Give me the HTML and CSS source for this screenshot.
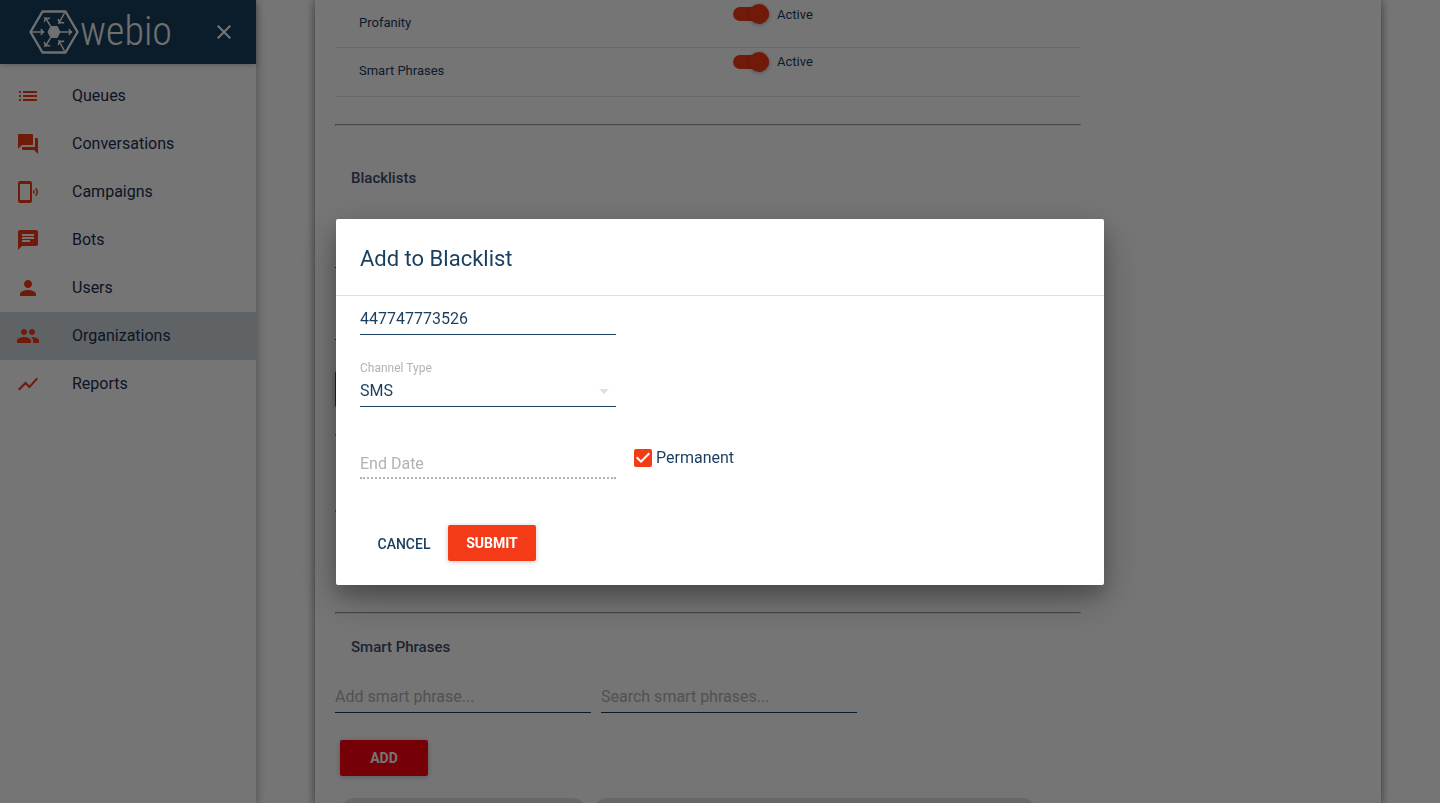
FILE: index.html
```html
<!DOCTYPE html>
<html lang="en">

<head>
    <meta charset="UTF-8">
    <meta name="viewport" content="width=device-width, initial-scale=1.0">
    <title>Webio - Organizations</title>
    <link rel="stylesheet" href="styles.css">
</head>

<body>
    <div class="app">
        <aside class="sidebar">
            <header class="sidebar-header">
                <a class="logo" href="#">
                    <svg width="52" height="46" viewBox="0 0 52 46" fill="none" stroke="currentColor">
                        <path d="M14.5 2.500h23L49.500 23l-12 20.500h-23L2.500 23z" stroke-width="2.400" stroke-linejoin="round" />
                        <path d="M22.500 17h7l3 6-3 6h-7l-3-6z" fill="currentColor" stroke="none" />
                        <path stroke-width="1.500" d="M3 23h13M13 20q.5 2.500 3 3q-2.500.5-3 3M32 23h12M41 20q.5 2.500 3 3q-2.500.5-3 3
                            M22.500 17l-5-8M16 13q1.500-1.500 1-4q2.500 1 5 0M22.500 29l-5 8M16 33q1.500 1.500 1 4q2.500-1 5 0
                            M36.500 4l-5.500 10M30 10q1.500 2 1 4q2.500-1 5 0M36.500 42l-5.500-10M30 36q1.500-2 1-4q2.500 1 5 0" />
                    </svg>
                    <span class="logo-text">webio</span>
                </a>
                <button class="close-button" type="button" aria-label="Close menu">
                    <svg width="24" height="24" viewBox="0 0 24 24" fill="currentColor"><path d="M19 6.410L17.590 5 12 10.590 6.410 5 5 6.410 10.590 12 5 17.590 6.410 19 12 13.410 17.590 19 19 17.590 13.410 12z" /></svg>
                </button>
            </header>
            <nav class="menu">
                <a class="menu-item" href="#">
                    <svg width="24" height="24" viewBox="0 0 24 24"><path d="M3 13h2v-2H3v2zm0 4h2v-2H3v2zm0-8h2V7H3v2zm4 4h14v-2H7v2zm0 4h14v-2H7v2zM7 7v2h14V7H7z" /></svg>
                    <span>Queues</span>
                </a>
                <a class="menu-item" href="#">
                    <svg width="24" height="24" viewBox="0 0 24 24"><path d="M21 6h-2v9H6v2c0 .55.45 1 1 1h11l4 4V7c0-.55-.45-1-1-1zm-4 6V3c0-.55-.45-1-1-1H3c-.55 0-1 .45-1 1v14l4-4h10c.55 0 1-.45 1-1z" /></svg>
                    <span>Conversations</span>
                </a>
                <a class="menu-item" href="#">
                    <svg width="24" height="24" viewBox="0 0 24 24"><path d="M14 1H4C2.900 1 2 1.900 2 3v18c0 1.100.9 2 2 2h10c1.100 0 2-.9 2-2V3c0-1.100-.9-2-2-2zm0 19H4V4h10v16zM20.100 7.700l-1 1c1.800 1.800 1.800 4.600 0 6.500l1 1c2.500-2.300 2.500-6.100 0-8.500zM18 9.800l-1 1c.5.7.5 1.600 0 2.300l1 1c1.200-1.200 1.200-3 0-4.300z" /></svg>
                    <span>Campaigns</span>
                </a>
                <a class="menu-item" href="#">
                    <svg width="24" height="24" viewBox="0 0 24 24"><path d="M20 2H4c-1.100 0-1.990.9-1.990 2L2 22l4-4h14c1.100 0 2-.9 2-2V4c0-1.100-.9-2-2-2zM6 9h12v2H6V9zm8 5H6v-2h8v2zm4-6H6V6h12v2z" /></svg>
                    <span>Bots</span>
                </a>
                <a class="menu-item" href="#">
                    <svg width="24" height="24" viewBox="0 0 24 24"><path d="M12 12c2.210 0 4-1.790 4-4s-1.790-4-4-4-4 1.790-4 4 1.790 4 4 4zm0 2c-2.670 0-8 1.340-8 4v2h16v-2c0-2.660-5.330-4-8-4z" /></svg>
                    <span>Users</span>
                </a>
                <a class="menu-item active" href="#">
                    <svg width="24" height="24" viewBox="0 0 24 24"><path d="M16 11c1.660 0 2.990-1.340 2.990-3S17.660 5 16 5c-1.660 0-3 1.340-3 3s1.340 3 3 3zm-8 0c1.660 0 2.990-1.340 2.990-3S9.660 5 8 5C6.340 5 5 6.340 5 8s1.340 3 3 3zm0 2c-2.330 0-7 1.170-7 3.500V19h14v-2.500c0-2.330-4.670-3.500-7-3.500zm8 0c-.29 0-.62.020-.97.050 1.160.84 1.970 1.970 1.970 3.450V19h6v-2.500c0-2.330-4.670-3.500-7-3.500z" /></svg>
                    <span>Organizations</span>
                </a>
                <a class="menu-item" href="#">
                    <svg width="24" height="24" viewBox="0 0 24 24"><path d="M3.500 18.490l6-6.010 4 4L22 6.920l-1.410-1.410-7.090 7.970-4-4L2 16.990z" /></svg>
                    <span>Reports</span>
                </a>
            </nav>
        </aside>

        <main class="content">
            <div class="panel">
                <table class="settings">
                    <tr>
                        <td>Profanity</td>
                        <td class="toggle-cell"><label class="toggle"><input type="checkbox" checked>Active</label></td>
                    </tr>
                    <tr>
                        <td>Smart Phrases</td>
                        <td class="toggle-cell"><label class="toggle"><input type="checkbox" checked>Active</label></td>
                    </tr>
                </table>

                <hr>

                <section class="blacklists">
                    <h2>Blacklists</h2>
                    <input class="text-field" type="text" aria-label="Add to blacklist">
                    <input class="text-field" type="text" aria-label="Search blacklist">
                    <button class="add-button" type="button" aria-label="Add to blacklist"></button>
                    <div class="list-row"></div>
                    <div class="list-row"></div>
                </section>

                <hr>

                <section class="phrases">
                    <h2>Smart Phrases</h2>
                    <div class="fields">
                        <input class="text-field" type="text" placeholder="Add smart phrase..." aria-label="Add smart phrase">
                        <input class="text-field" type="text" placeholder="Search smart phrases..." aria-label="Search smart phrases">
                    </div>
                    <button class="add-button" type="button">ADD</button>
                    <div class="chips">
                        <span class="chip"></span>
                        <span class="chip chip-wide"></span>
                    </div>
                </section>
            </div>
        </main>
    </div>

    <div class="overlay">
        <form class="dialog" role="dialog" aria-labelledby="dialogTitle">
            <h1 id="dialogTitle">Add to Blacklist</h1>
            <div class="dialog-body">
                <input class="text-field" type="text" value="447747773526" aria-label="Phone number">
                <div class="select-field">
                    <label for="channelType">Channel Type</label>
                    <select id="channelType">
                        <option>SMS</option>
                    </select>
                    <svg class="arrow" width="24" height="24" viewBox="0 0 24 24"><path d="M7 10l5 5 5-5z" /></svg>
                </div>
                <div class="date-row">
                    <input class="date-field" type="text" placeholder="End Date" aria-label="End Date" disabled>
                    <label class="permanent">
                        <span class="checkbox">
                            <input type="checkbox" checked>
                            <svg width="18" height="18" viewBox="0 0 18 18"><path d="M7 14L2 9l1.410-1.410L7 11.170l7.590-7.590L16 5z" /></svg>
                        </span>
                        Permanent
                    </label>
                </div>
                <div class="actions">
                    <button class="cancel-button" type="button">CANCEL</button>
                    <button class="submit-button" type="submit">SUBMIT</button>
                </div>
            </div>
        </form>
    </div>
</body>

</html>
```

FILE: styles.css
```css
* {
    box-sizing: border-box;
}

body {
    margin: 0;
    font-family: Roboto, "Liberation Sans", sans-serif;
    font-size: 16px;
    color: #1a3e5e;
    background-color: #fff;
}

button,
input,
select {
    font-family: inherit;
    color: inherit;
}

.app {
    display: flex;
    height: 100vh;
    overflow: hidden;
}

/* sidebar */
.sidebar {
    flex: none;
    width: 256px;
    box-shadow: 0 3px 10px rgba(0, 0, 0, 0.16), 0 3px 10px rgba(0, 0, 0, 0.23);
}

.sidebar-header {
    display: flex;
    align-items: center;
    justify-content: space-between;
    height: 64px;
    padding: 0 20px 0 28px;
    color: #fff;
    background-color: #1a3e5e;
    box-shadow: 0 1px 6px rgba(0, 0, 0, 0.12), 0 1px 4px rgba(0, 0, 0, 0.12);
}

.logo {
    display: flex;
    align-items: center;
    color: #f4f4f4;
    text-decoration: none;
}

.logo-text {
    font-family: "Roboto Condensed", "Open Sans Condensed", Roboto, sans-serif;
    font-size: 40px;
    font-weight: 300;
    line-height: 56px;
}

.close-button {
    display: flex;
    padding: 0;
    border: none;
    background: none;
}

.menu {
    padding-top: 8px;
}

.menu-item {
    display: flex;
    align-items: center;
    gap: 32px;
    height: 48px;
    padding-left: 16px;
    color: #1a2f54;
    text-decoration: none;
}

.menu-item svg {
    fill: #f43b17;
}

.menu-item span {
    padding-bottom: 2px;
}

.menu-item.active {
    background-color: #cfd8dc;
}

/* organization page */
.content {
    flex: 1;
    padding: 0 59px;
}

.panel {
    height: 100%;
    padding: 0 300px 0 20px;
    overflow: hidden;
    box-shadow: 0 3px 10px rgba(0, 0, 0, 0.3), 0 0 8px rgba(0, 0, 0, 0.3);
}

.panel hr {
    margin: 0;
}

.settings {
    width: 100%;
    margin-bottom: 27px;
    border-collapse: collapse;
    font-size: 13px;
}

.settings tr {
    height: 49px;
    border-bottom: 1px solid #e0e0e0;
}

.settings tr:first-child {
    height: 47px;
}

.settings td {
    width: 50%;
    padding: 0 24px 2px;
}

.settings .toggle-cell {
    padding-top: 4px;
    padding-left: 25px;
    vertical-align: top;
}

.toggle {
    display: flex;
    align-items: center;
    gap: 8px;
}

.toggle input {
    appearance: none;
    display: flex;
    align-items: center;
    justify-content: flex-end;
    width: 36px;
    height: 14px;
    margin: 3px 0;
    border-radius: 7px;
    background-color: #f43b17;
}

.toggle input::before {
    content: "";
    width: 20px;
    height: 20px;
    border-radius: 50%;
    background-color: #f43b17;
    box-shadow: 0 1px 4px rgba(0, 0, 0, 0.3);
}

h2 {
    margin: 0;
    padding-left: 16px;
    font-size: 15px;
    font-weight: 500;
    line-height: 24px;
    color: #3f4d6c;
}

.text-field {
    width: 256px;
    height: 39px;
    padding: 7px 0 0;
    border: none;
    border-bottom: 1px solid #1a3e5e;
    outline: none;
    background: none;
    font-size: 16px;
}

.text-field::placeholder,
.date-field::placeholder {
    color: #b2b2b2;
    opacity: 1;
}

.blacklists {
    display: flex;
    flex-direction: column;
    align-items: flex-start;
    height: 486px;
    padding-top: 40px;
}

.blacklists .text-field {
    margin-top: 39px;
}

.blacklists .text-field + .text-field {
    margin-top: 33px;
}

.add-button {
    width: 88px;
    height: 36px;
    border: none;
    border-radius: 2px;
    color: #fff;
    background-color: #ff0011;
    box-shadow: 0 1px 6px rgba(0, 0, 0, 0.12), 0 1px 4px rgba(0, 0, 0, 0.12);
    font-size: 14px;
    font-weight: 700;
}

.blacklists .add-button {
    margin-top: 31px;
}

.list-row {
    width: 100%;
    margin-top: 27px;
    border-top: 2px solid #9e9e9e;
}

.list-row + .list-row {
    margin-top: 74px;
}

.phrases {
    padding-top: 21px;
}

.fields {
    display: flex;
    gap: 10px;
    margin-top: 15px;
}

.phrases .add-button {
    margin: 27px 5px 22px;
}

.chips {
    display: flex;
    gap: 4px;
    padding-left: 4px;
}

.chip {
    width: 249px;
    height: 32px;
    border-radius: 16px;
    background-color: #e0e0e0;
}

.chip-wide {
    width: 446px;
}

/* dialog */
.overlay {
    position: fixed;
    inset: 0;
    display: flex;
    align-items: center;
    justify-content: center;
    background-color: rgba(0, 0, 0, 0.54);
}

.dialog {
    width: 75%;
    max-width: 768px;
    border-radius: 2px;
    background-color: #fff;
    box-shadow: 0 14px 45px rgba(0, 0, 0, 0.25), 0 10px 18px rgba(0, 0, 0, 0.22);
}

.dialog h1 {
    margin: 0;
    padding: 24px 24px 20px;
    border-bottom: 1px solid #e0e0e0;
    font-size: 22px;
    font-weight: 400;
    line-height: 32px;
}

.dialog-body {
    padding: 0 24px 24px;
}

.dialog-body .text-field {
    display: block;
}

.select-field {
    position: relative;
    display: flex;
    flex-direction: column;
    width: 256px;
    padding-top: 25px;
}

.select-field label {
    font-size: 12px;
    line-height: 16px;
    color: #b2b2b2;
}

.select-field select {
    appearance: none;
    height: 31px;
    padding: 0;
    border: none;
    border-bottom: 1px solid #1a3e5e;
    outline: none;
    background: none;
    font-size: 16px;
}

.arrow {
    position: absolute;
    right: 0;
    bottom: 4px;
    fill: #e0e0e0;
    pointer-events: none;
}

.date-row {
    display: flex;
    align-items: flex-start;
    gap: 18px;
    padding-top: 39px;
}

.date-field {
    width: 256px;
    height: 33px;
    padding: 5px 0 0;
    border: none;
    border-bottom: 2px dotted #b2b2b2;
    background: none;
    font-size: 16px;
}

.permanent {
    display: flex;
    align-items: center;
    gap: 4px;
    line-height: 24px;
}

.checkbox {
    display: grid;
}

.checkbox > * {
    grid-area: 1 / 1;
}

.checkbox input {
    appearance: none;
    width: 18px;
    height: 18px;
    margin: 0;
    border-radius: 2px;
    background-color: #f43b17;
}

.checkbox svg {
    fill: #fff;
    pointer-events: none;
}

.actions {
    display: flex;
    padding-top: 46px;
}

.actions button {
    width: 88px;
    height: 36px;
    padding: 0;
    border: none;
    border-radius: 2px;
    font-size: 14px;
    font-weight: 500;
}

.actions .cancel-button {
    padding-top: 2px;
    background: none;
}

.actions .submit-button {
    color: #fff;
    background-color: #f43b17;
    box-shadow: 0 1px 6px rgba(0, 0, 0, 0.12), 0 1px 4px rgba(0, 0, 0, 0.12);
    font-weight: 700;
}
```
